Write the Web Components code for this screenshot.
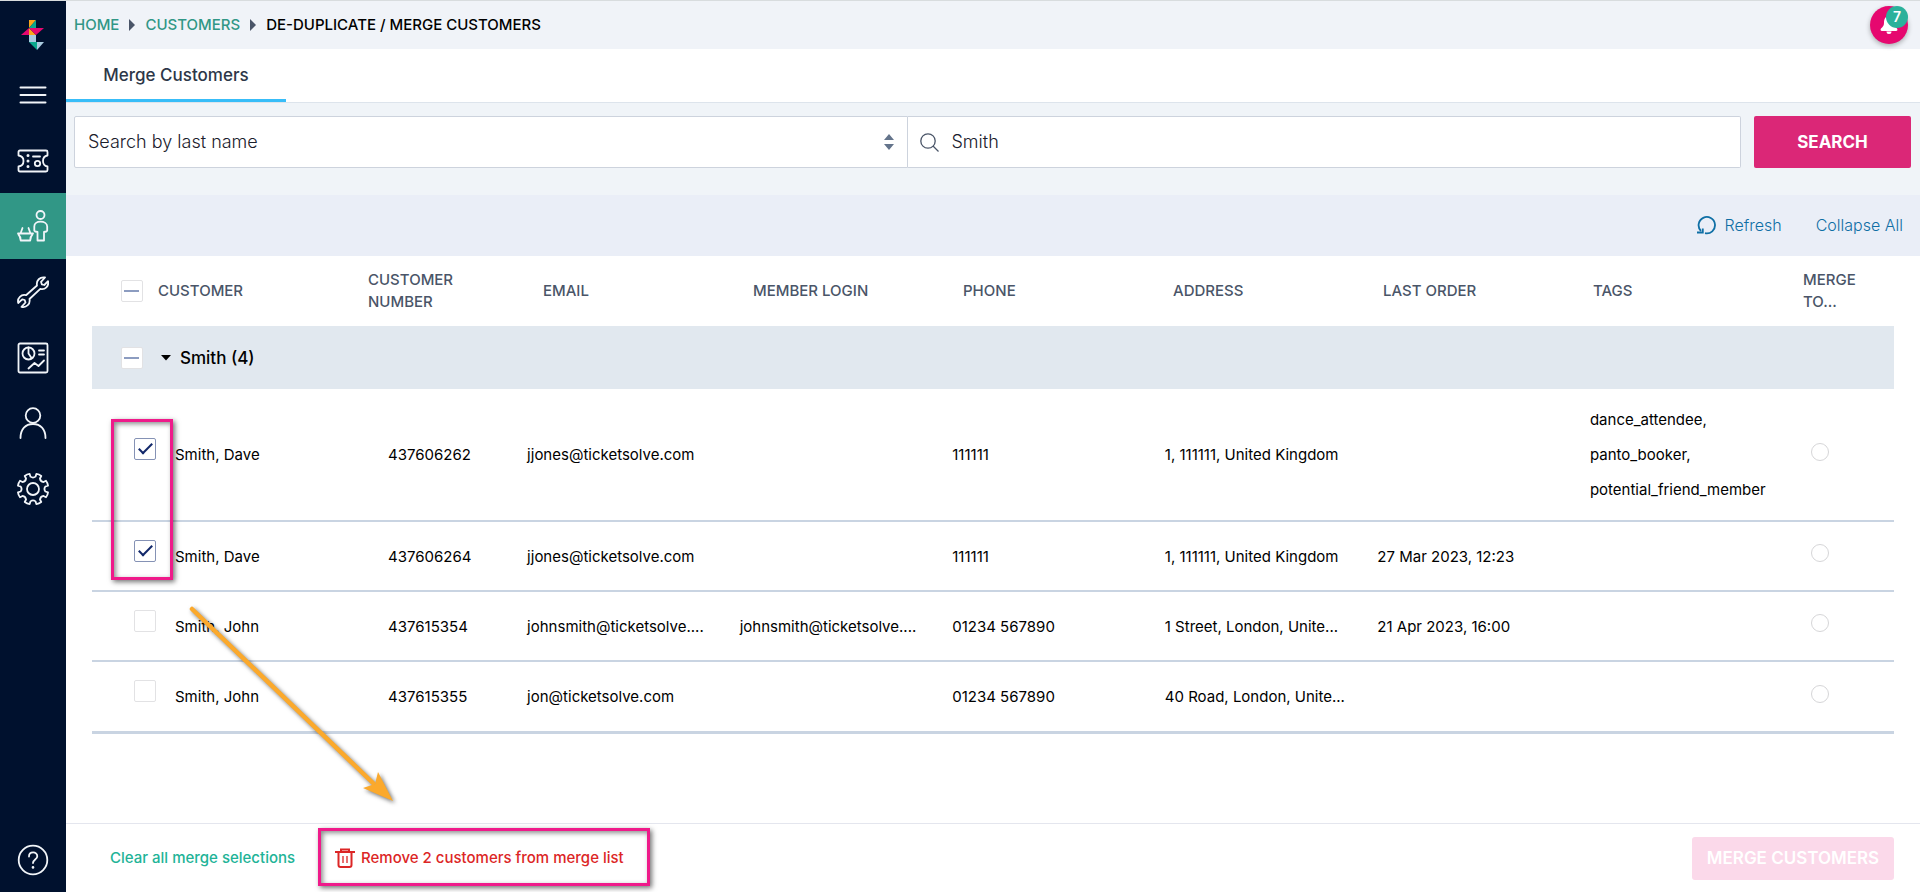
<!DOCTYPE html>
<html lang="en">
<head>
<meta charset="utf-8">
<title>De-duplicate / Merge Customers</title>
<style>
  html { height: 100%; }
  body { margin: 0; min-height: 100%; display: flex; font: 400 15px/24px Inter, "Liberation Sans", sans-serif; color: #000; background: #fff; }
  ts-app { flex: 1; }
</style>
</head>
<body>
<ts-app></ts-app>
<script>
function define(tag, html, setup) {
  const template = document.createElement('template');
  template.innerHTML = html;
  customElements.define(tag, class extends HTMLElement {
    constructor() {
      super();
      this.attachShadow({ mode: 'open' }).append(template.content.cloneNode(true));
    }
    connectedCallback() { if (setup) setup(this, this.shadowRoot); }
  });
}

define('ts-nav-item', `
<style>
  :host { display: flex; flex: 1; }
  a { flex: 1; display: flex; align-items: center; justify-content: center; color: #f1f5f9; }
  :host([active]) a { background: #319786; }
  ::slotted(svg) { display: block; width: 32px; height: 32px; fill: none; stroke: currentColor; stroke-width: 1.8; stroke-linecap: round; stroke-linejoin: round; }
</style>
<a href="#"><slot></slot></a>`, (host, root) => {
  root.querySelector('a').setAttribute('aria-label', host.getAttribute('label'));
});

define('ts-sidebar', `
<style>
  :host { display: flex; flex-direction: column; width: 66px; background: #00112e; }
  .logo { display: flex; justify-content: center; align-items: center; height: 61px; padding-top: 6px; box-sizing: border-box; }
  nav { display: flex; flex-direction: column; height: 460px; }
  .help { margin-top: auto; height: 64px; display: flex; }
</style>
<a class="logo" href="#" aria-label="Ticketsolve home">
  <svg width="24" height="32" viewBox="0 0 24 32">
    <path d="M8 1h7l-7 8z" fill="#faa61a"/><path d="M15 1v8H8z" fill="#0aa98d"/>
    <path d="M8 9v7H0z" fill="#e6086f"/><path d="M8 9l7 7H8z" fill="#faa61a"/><path d="M8 9h15l-8 7z" fill="#e6086f"/>
    <path d="M8 16h7v7H8z" fill="#a9cbdf"/><path d="M8 23h8v8z" fill="#0aa98d"/><path d="M16 23h7l-7 8z" fill="#a9cbdf"/>
  </svg>
</a>
<nav aria-label="Main">
  <ts-nav-item label="Menu"><svg viewBox="0 0 32 32"><path d="M3.500 8.500h25M3.500 16h25M3.500 23.500h25" stroke-width="2"/></svg></ts-nav-item>
  <ts-nav-item label="Events"><svg viewBox="0 0 32 32"><path d="M3 5.500h26q1.500 0 1.500 1.500v3.500c-3 .5-4.500 3-4.500 5.500s1.500 5 4.500 5.500V25q0 1.500-1.500 1.500H3Q1.500 26.500 1.500 25v-3.500C5.500 21 6.500 18.500 6.500 16S5.500 11 1.500 10.500V7q0-1.500 1.500-1.500z"/><circle cx="20.500" cy="18.500" r="2.700"/><path d="M16 11.500h7"/><path d="M11 10.500v.1M11 16v.1M11 21.500v.1" stroke-width="3"/></svg></ts-nav-item>
  <ts-nav-item label="Customers" active><svg viewBox="0 0 32 32"><circle cx="23.500" cy="5" r="4"/><path d="M20.500 30.500v-8.500l-2.200-.5-1-1v-4c0-3 2.700-4.800 6.200-4.800s6.700 1.800 6.700 4.800v4l-1 1-2.200.5v8.500zM1 23.500h15M3.500 23.500l2-5.500M13.500 23.500l-2-5.500M1.500 24.500q2 2 2.200 6h9.500q.2-4 2.200-6"/></svg></ts-nav-item>
  <ts-nav-item label="Tools"><svg viewBox="0 0 32 32"><path d="M20 9.500C19 4.500 23 .5 28 1.500l-4 4.300.8 2.500 2.500.7 3.700-3.800c1.200 5-3 9-7.700 7.700L12.500 23c1 5-3 9-8 7.800l4-4.300-.8-2.500-2.500-.7L1.200 27C0 22 4.200 18 9 19.200z"/></svg></ts-nav-item>
  <ts-nav-item label="Reports"><svg viewBox="0 0 32 32"><rect x="1.500" y="1.500" width="29" height="29" rx="1.500"/><circle cx="11.500" cy="11.500" r="6"/><path d="M11.500 5.500v6l3 4.500M22 8.500h5M22 12.500h5M11.500 26.500l6-5.500 4 3L27 18.500"/></svg></ts-nav-item>
  <ts-nav-item label="Account"><svg viewBox="0 0 32 32"><circle cx="16" cy="8.500" r="7.300"/><path d="M3.500 31c0-9 5-14 12.500-14s12.500 5 12.500 14"/></svg></ts-nav-item>
  <ts-nav-item label="Settings"><svg viewBox="0 0 32 32"><circle cx="16" cy="16" r="6"/><path id="gear" d=""/></svg></ts-nav-item>
</nav>
<div class="help"><ts-nav-item label="Help"><svg viewBox="0 0 32 32"><circle cx="16" cy="16" r="14.300"/><path d="M12 12.500c0-5.500 8.300-5.300 8.300-.3 0 3.300-4.300 3.300-4.300 6.800"/><path d="M16 23.300v.1" stroke-width="2.600"/></svg></ts-nav-item></div>`, (host, root) => {
  // Eight rounded teeth around the hub.
  let d = '';
  for (let i = 0; i < 8; i++) {
    const a = i * 45 + 22.5;
    const pt = (r, deg) => { const t = (a + deg) * Math.PI / 180; return (16 + r * Math.sin(t)).toFixed(2) + ' ' + (16 - r * Math.cos(t)).toFixed(2); };
    d += (i ? 'L' : 'M') + pt(12.6, -11) + 'L' + pt(15.4, -10) + 'Q' + pt(15.900, 0) + ' ' + pt(15.4, 10) + 'L' + pt(12.6, 11) + 'Q' + pt(10.5, 22.5) + ' ' + pt(12.6, 34);
  }
  root.getElementById('gear').setAttribute('d', d + 'z');
});

define('ts-notifications', `
<style>
  :host { display: block; }
  button { position: relative; display: flex; align-items: center; justify-content: center; width: 38px; height: 38px; padding: 0; border: 0; border-radius: 50%; background: #e6086f; box-shadow: 0 2px 5px rgba(0,0,0,.3); font: inherit; }
  .count { position: absolute; top: 0; right: 0; width: 22px; height: 22px; border-radius: 50%; background: #2bb19b; color: #fff; font-size: 14px; font-weight: 600; line-height: 22px; text-align: center; }
</style>
<button type="button" aria-label="Notifications">
  <svg width="20" height="20" viewBox="0 0 20 20" fill="#fff"><path d="M10 1C6.500 1 5 4 5 8c0 3-1.500 4-3 5.500-.8 1-.5 2.500 1 2.500h14c1.500 0 1.800-1.500 1-2.500C16.500 12 15 11 15 8c0-4-1.500-7-5-7zM7.500 16.500h5a2.500 2.500 0 0 1-5 0z"/></svg>
  <span class="count">7</span>
</button>`);

define('ts-breadcrumbs', `
<style>
  :host { display: flex; align-items: center; justify-content: space-between; height: 48px; padding: 0 12px 0 8px; background: #f0f3f8; }
  nav { display: flex; align-items: center; gap: 9px; font-size: 15px; font-weight: 500; }
  a { color: #319786; text-decoration: none; }
  svg { fill: #4a5568; }
</style>
<nav aria-label="Breadcrumb">
  <a href="#">HOME</a><svg width="8" height="12" viewBox="0 0 8 12"><path d="M1 0l6 6-6 6z"/></svg>
  <a href="#">CUSTOMERS</a><svg width="8" height="12" viewBox="0 0 8 12"><path d="M1 0l6 6-6 6z"/></svg>
  <span aria-current="page">DE-DUPLICATE / MERGE CUSTOMERS</span>
</nav>
<ts-notifications></ts-notifications>`);

define('ts-tabs', `
<style>
  :host { display: flex; height: 53px; border-bottom: 1px solid #dde4ec; background: #fff; }
  a { box-sizing: border-box; width: 220px; padding-top: 14px; border-bottom: 3px solid #38bdf8; text-align: center; font-size: 17px; font-weight: 500; color: #2d3748; text-decoration: none; }
</style>
<a href="#" aria-current="page">Merge Customers</a>`);

define('ts-search', `
<style>
  :host { display: block; padding: 13px 9px 27px 8px; background: #f0f4f8; }
  form { display: flex; height: 52px; }
  .field { flex: 1 1 0; display: flex; position: relative; min-width: 0; }
  select, input { flex: 1; min-width: 0; box-sizing: border-box; margin: 0; border: 1px solid #cdd3dd; background: #fff; font: inherit; font-size: 18px; font-weight: 300; color: #1a202c; appearance: none; outline: 0; }
  select { padding: 0 40px 0 13px; border-radius: 2px 0 0 2px; }
  input { padding: 0 16px 0 44px; border-left: 0; border-radius: 0 2px 2px 0; }
  .field svg { position: absolute; top: 17px; pointer-events: none; }
  .arrows { right: 14px; fill: #64748b; }
  .glass { left: 12px; fill: none; stroke: #4a5568; stroke-width: 1.3; }
  button { width: 157px; margin-left: 13px; padding: 0; border: 0; border-radius: 2px; background: #db2777; color: #fff; font: inherit; font-size: 17px; font-weight: 700; }
</style>
<form onsubmit="return false">
  <div class="field">
    <select aria-label="Search type"><option>Search by last name</option></select>
    <svg class="arrows" width="10" height="18" viewBox="0 0 10 18"><path d="M0 7l5-6 5 6zM0 11h10l-5 6z"/></svg>
  </div>
  <div class="field">
    <input type="text" value="Smith" aria-label="Search term">
    <svg class="glass" width="20" height="20" viewBox="0 0 20 20"><circle cx="8" cy="8" r="7.200"/><path d="M13 13l5.500 5.500"/></svg>
  </div>
  <button type="submit">SEARCH</button>
</form>`);

define('ts-toolbar', `
<style>
  :host { display: flex; align-items: center; justify-content: flex-end; gap: 34px; box-sizing: border-box; height: 61px; padding: 0 17px 2px 0; background: #eaeef7; }
  a { display: flex; align-items: center; gap: 8px; font-size: 16px; font-weight: 300; color: #0f6fa5; text-decoration: none; }
  svg { fill: none; stroke: currentColor; stroke-width: 1.8; }
</style>
<a href="#"><svg width="20" height="20" viewBox="0 0 20 20"><path d="M4 16A8.200 8.200 0 1 1 8 18.200"/><path d="M0 17.500h5.800v-4"/></svg>Refresh</a>
<a href="#">Collapse All</a>`);

define('ts-check', `
<style>
  :host { display: block; width: 22px; height: 22px; }
  input { display: block; box-sizing: border-box; width: 22px; height: 22px; margin: 0; appearance: none; border: 1px solid #e2e2e4; border-radius: 2px; background: #fff; position: relative; }
  input:checked { border-color: #8592b5; }
  input:checked::before { content: ""; position: absolute; left: 7px; top: 1px; width: 5px; height: 12px; border: solid #12286a; border-width: 0 2px 2px 0; transform: rotate(45deg); }
  input:indeterminate::before { content: ""; position: absolute; left: 2px; top: 9px; width: 15px; height: 2px; background: #8c9cc0; }
</style>
<input type="checkbox">`, (host, root) => {
  const box = root.querySelector('input');
  box.checked = host.hasAttribute('checked');
  box.indeterminate = host.hasAttribute('mixed');
  box.setAttribute('aria-label', host.getAttribute('label'));
});

define('ts-customer-table', `
<style>
  :host { display: block; padding: 0 26px; }
  table, thead, tbody { display: block; }
  tr { display: grid; align-items: center; box-sizing: border-box; }
  th, td { min-width: 0; padding: 0; text-align: left; white-space: nowrap; }
  thead tr { grid-template-columns: 276fr 175fr repeat(6, 210fr) 91fr; height: 70px; }
  thead th { font-size: 15px; font-weight: 500; line-height: 22px; color: #4a5568; }
  thead th.wrap { white-space: normal; }
  .first { display: flex; align-items: center; gap: 15px; padding-left: 29px; }
  .group { grid-template-columns: 1fr; height: 63px; background: #e1e8ef; }
  .group .first { gap: 18px; }
  .group button { display: flex; align-items: center; gap: 9px; padding: 0; border: 0; background: none; font: inherit; font-size: 17px; font-weight: 500; color: #000; }
  .row { grid-template-columns: 592fr 278fr repeat(5, 425fr) 442fr 166fr; min-height: 70px; padding: 13px 0; border-bottom: 2px solid #c9d4e2; line-height: 35px; font-size: 15px; }
  .row:last-child { min-height: 72px; border-bottom-width: 3px; }
  .row .first { gap: 19px; padding-left: 42px; }
  .row ts-check { margin-bottom: 11px; }
  .row input { display: block; box-sizing: border-box; width: 18px; height: 18px; margin: 0 0 6px; appearance: none; border: 1px solid #d6d6d8; border-radius: 50%; background: #fff; }
</style>
<table>
  <thead><tr>
    <th><div class="first"><ts-check mixed label="Select all customers"></ts-check>CUSTOMER</div></th>
    <th class="wrap">CUSTOMER<br>NUMBER</th><th>EMAIL</th><th>MEMBER LOGIN</th><th>PHONE</th><th>ADDRESS</th><th>LAST ORDER</th><th>TAGS</th><th class="wrap">MERGE<br>TO...</th>
  </tr></thead>
  <tbody>
    <tr class="group"><th scope="rowgroup"><div class="first"><ts-check mixed label="Select all Smith"></ts-check><button type="button" aria-expanded="true"><svg width="10" height="6" viewBox="0 0 10 6"><path d="M0 0h10L5 5.500z"/></svg>Smith (4)</button></div></th></tr>
  </tbody>
</table>`, (host, root) => {
  const rows = [
    [1, 'Smith, Dave', '437606262', 'jjones@ticketsolve.com', '', '111111', '1, 111111, United Kingdom', '', 'dance_attendee,<br>panto_booker,<br>potential_friend_member'],
    [1, 'Smith, Dave', '437606264', 'jjones@ticketsolve.com', '', '111111', '1, 111111, United Kingdom', '27 Mar 2023, 12:23', ''],
    [0, 'Smith, John', '437615354', 'johnsmith@ticketsolve....', 'johnsmith@ticketsolve....', '01234 567890', '1 Street, London, Unite...', '21 Apr 2023, 16:00', ''],
    [0, 'Smith, John', '437615355', 'jon@ticketsolve.com', '', '01234 567890', '40 Road, London, Unite...', '', '']
  ];
  root.querySelector('tbody').insertAdjacentHTML('beforeend', rows.map(([checked, name, ...cells]) => `
    <tr class="row"><td><div class="first"><ts-check ${checked ? 'checked' : ''} label="Select ${name} ${cells[0]}"></ts-check>${name}</div></td>
    ${cells.map(c => `<td>${c}</td>`).join('')}
    <td><input type="radio" name="merge-to" aria-label="Merge to ${cells[0]}"></td></tr>`).join(''));
});

define('ts-actions', `
<style>
  :host { display: flex; align-items: center; box-sizing: border-box; height: 69px; margin-top: auto; padding: 0 26px 0 44px; border-top: 1px solid #e4e6ee; }
  button { display: flex; align-items: center; padding: 0; border: 0; background: none; font: inherit; font-size: 15px; font-weight: 500; white-space: nowrap; }
  .clear { width: 225px; color: #21b397; }
  .remove { gap: 6px; color: #dc2626; }
  .merge { justify-content: center; width: 202px; height: 43px; margin-left: auto; border-radius: 3px; background: #fbd9ea; color: #fff; font-size: 17px; font-weight: 600; }
  svg { fill: none; stroke: currentColor; stroke-width: 2; }
</style>
<button class="clear" type="button">Clear all merge selections</button>
<button class="remove" type="button"><svg width="20" height="20" viewBox="0 0 20 20"><path d="M0 4h20M6 4V1.500h8V4M3.500 4v13q0 2 2 2h9q2 0 2-2V4"/><path d="M8 8v7M12 8v7" stroke-width="1.300"/></svg>Remove 2 customers from merge list</button>
<button class="merge" type="button" disabled>MERGE CUSTOMERS</button>`);

define('ts-callout', `
<style>
  :host { position: absolute; box-sizing: border-box; border: 3px solid #ef1a8a; box-shadow: 2px 2px 5px rgba(0,0,0,.55), inset 2px 2px 5px rgba(0,0,0,.45); pointer-events: none; }
</style>`);

define('ts-arrow', `
<style>
  :host { position: absolute; pointer-events: none; }
  svg { display: block; overflow: visible; filter: drop-shadow(2px 2px 2px rgba(0,0,0,.55)); }
</style>
<svg width="202" height="194" viewBox="0 0 202 194"><path d="M1 1l181 174" stroke="#fba92c" stroke-width="4.500" stroke-linecap="round"/><path d="M202 193l-30-13 12-4 3-12z" fill="#fba92c"/></svg>`);

define('ts-app', `
<style>
  :host { display: flex; position: relative; box-sizing: border-box; border-top: 1px solid #d8dcde; }
  main { flex: 1; display: flex; flex-direction: column; min-width: 0; }
  .checks { left: 111px; top: 418px; width: 62px; height: 161px; }
  .removal { left: 318px; bottom: 6px; width: 332px; height: 58px; }
  ts-arrow { left: 191px; top: 607px; }
</style>
<ts-sidebar></ts-sidebar>
<main>
  <ts-breadcrumbs></ts-breadcrumbs>
  <ts-tabs></ts-tabs>
  <ts-search></ts-search>
  <ts-toolbar></ts-toolbar>
  <ts-customer-table></ts-customer-table>
  <ts-actions></ts-actions>
</main>
<ts-callout class="checks"></ts-callout>
<ts-callout class="removal"></ts-callout>
<ts-arrow></ts-arrow>`);
</script>
</body>
</html>
